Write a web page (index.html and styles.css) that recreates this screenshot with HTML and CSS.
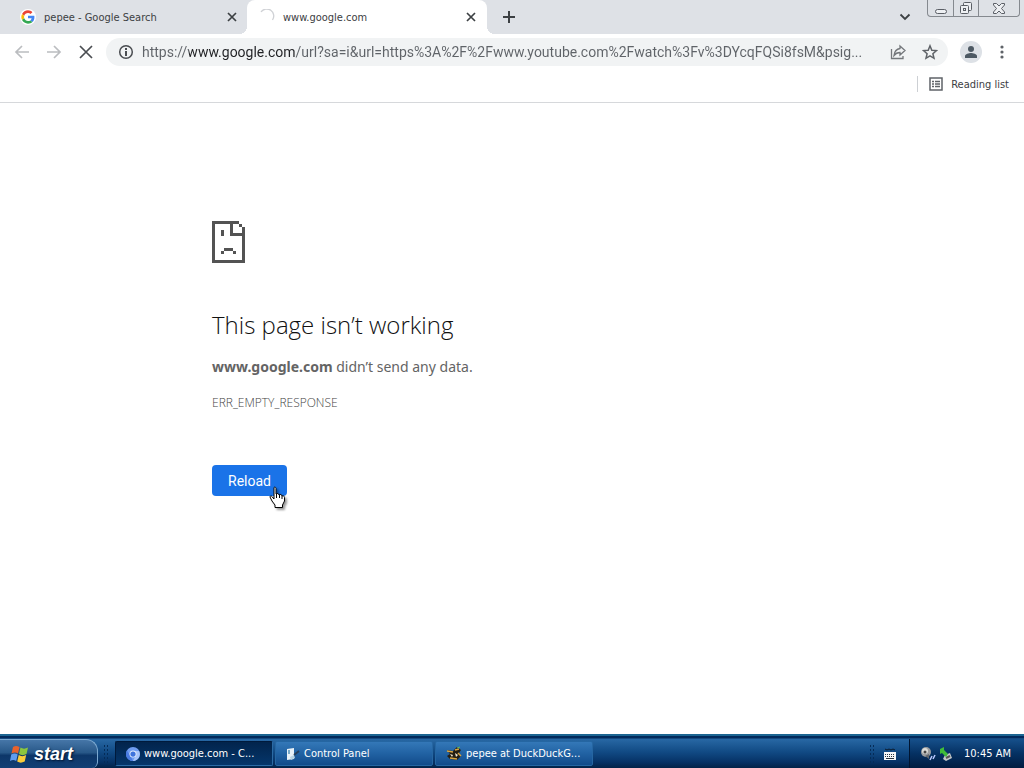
FILE: index.html
```html
<!DOCTYPE html>
<html lang="en">
<head>
    <meta charset="UTF-8">
    <meta name="viewport" content="width=device-width, initial-scale=1.0">
    <title>www.google.com</title>
    <link rel="stylesheet" href="styles.css">
</head>
<body>

    <!-- Tab strip -->
    <header class="tab-strip">
        <div class="tab">
            <svg class="tab-icon" viewBox="0 0 48 48" width="16" height="16">
                <circle cx="24" cy="24" r="24" fill="#fff"/>
                <path fill="#EA4335" d="M24 12c3 0 5.500 1 7.600 3l5.600-5.600C33.800 6.200 29.300 4 24 4 16.200 4 9.400 8.500 6.100 15l6.600 5.100C14.300 15.400 18.700 12 24 12z"/>
                <path fill="#4285F4" d="M43.300 24.500c0-1.500-.1-2.600-.4-3.900H24v7.500h10.900c-.5 2.600-1.900 4.700-4 6.200l6.400 5c3.800-3.500 6-8.700 6-14.800z"/>
                <path fill="#FBBC05" d="M12.700 28.100c-.8-2.600-.8-5.400 0-8L6.100 15c-2.800 5.700-2.800 12.400 0 18.100z"/>
                <path fill="#34A853" d="M24 44c5.300 0 9.900-1.700 13.300-4.700l-6.400-5c-1.800 1.200-4.100 1.900-6.900 1.900-5.300 0-9.700-3.400-11.300-8.100l-6.600 5C9.400 39.500 16.200 44 24 44z"/>
            </svg>
            <span class="tab-title">pepee - Google Search</span>
            <button class="icon-btn tab-close" type="button" aria-label="Close tab">
                <svg viewBox="0 0 10 10" width="10" height="10"><path d="M1 1l8 8M9 1L1 9" stroke="#3c4043" stroke-width="1.700" fill="none"/></svg>
            </button>
        </div>
        <div class="tab active">
            <svg class="tab-icon" viewBox="0 0 16 16" width="16" height="16"><path d="M2 3a7 7 0 0 1 11.500 8" stroke="#cfd1d5" stroke-width="1.300" fill="none"/></svg>
            <span class="tab-title">www.google.com</span>
            <button class="icon-btn tab-close" type="button" aria-label="Close tab">
                <svg viewBox="0 0 10 10" width="10" height="10"><path d="M1 1l8 8M9 1L1 9" stroke="#3c4043" stroke-width="1.700" fill="none"/></svg>
            </button>
        </div>
        <button class="icon-btn new-tab" type="button" aria-label="New tab">
            <svg viewBox="0 0 12 12" width="12" height="12"><path d="M6 0v12M0 6h12" stroke="#3c4043" stroke-width="2" fill="none"/></svg>
        </button>
        <button class="icon-btn tab-search" type="button" aria-label="Search tabs">
            <svg viewBox="0 0 12 8" width="12" height="8"><path d="M1.500 1.500L6 6l4.500-4.500" stroke="#3c4043" stroke-width="1.800" fill="none"/></svg>
        </button>
        <div class="window-controls">
            <button type="button" aria-label="Minimize">
                <svg viewBox="0 0 14 14" width="14" height="14"><rect x="1.500" y="8.500" width="11" height="4" rx="2" fill="#eef0f3" stroke="#5b5f66"/></svg>
            </button>
            <button type="button" aria-label="Restore">
                <svg viewBox="0 0 14 14" width="14" height="14" fill="#eef0f3" stroke="#5b5f66"><rect x="4.500" y="1.500" width="8" height="8" rx="1"/><rect x="1.500" y="4.500" width="8" height="8" rx="1"/><rect x="4.500" y="7.500" width="2" height="2"/></svg>
            </button>
            <button class="close" type="button" aria-label="Close">
                <svg viewBox="0 0 14 14" width="14" height="14"><path d="M1.500 2.500h3L7 5l2.500-2.500h3V4l-3 3.500 3 3.500v1.500h-3L7 10l-2.500 2.500h-3V11l3-3.500-3-3.500z" fill="#eef0f3" stroke="#5b5f66"/></svg>
            </button>
        </div>
    </header>

    <!-- Toolbar -->
    <nav class="toolbar">
        <div class="nav-buttons">
            <button class="icon-btn" type="button" aria-label="Back">
                <svg viewBox="0 0 16 16" width="16" height="16"><path d="M15 8H2M8 2L2 8l6 6" stroke="#bbbdc0" stroke-width="1.700" fill="none"/></svg>
            </button>
            <button class="icon-btn" type="button" aria-label="Forward">
                <svg viewBox="0 0 16 16" width="16" height="16"><path d="M1 8h13M8 2l6 6-6 6" stroke="#bbbdc0" stroke-width="1.700" fill="none"/></svg>
            </button>
            <button class="icon-btn" type="button" aria-label="Stop loading">
                <svg viewBox="0 0 16 16" width="16" height="16"><path d="M2 2l12 12M14 2L2 14" stroke="#4a4d51" stroke-width="1.700" fill="none"/></svg>
            </button>
        </div>
        <div class="omnibox">
            <button class="icon-btn" type="button" aria-label="View site information">
                <svg viewBox="0 0 16 16" width="16" height="16"><circle cx="8" cy="8" r="6.300" stroke="#4a4d51" stroke-width="1.500" fill="none"/><path d="M8 7v5M8 4v2" stroke="#4a4d51" stroke-width="2"/></svg>
            </button>
            <input class="url" type="text" aria-label="Address" value="https://www.google.com/url?sa=i&amp;url=https%3A%2F%2Fwww.youtube.com%2Fwatch%3Fv%3DYcqFQSi8fsM&amp;psig...">
            <button class="icon-btn" type="button" aria-label="Share this page">
                <svg viewBox="0 0 16 16" width="16" height="16" fill="none" stroke="#74777b" stroke-width="1.300"><path d="M1.500 5v9.500h11.500V12"/><path d="M10 2l5 4.500L10 11V8.500C7 8.500 5.500 9.500 4 11.500 4.500 7.500 6.500 5 10 4.500z"/></svg>
            </button>
            <button class="icon-btn" type="button" aria-label="Bookmark this tab">
                <svg viewBox="0 0 16 16" width="16" height="16"><path d="M8 1.800l1.800 4.400 4.700.4-3.600 3.100 1.100 4.600L8 11.900l-4 2.400 1.100-4.600-3.600-3.100 4.700-.4z" stroke="#5f6368" stroke-width="1.500" fill="none"/></svg>
            </button>
        </div>
        <button class="icon-btn avatar" type="button" aria-label="Profile">
            <svg viewBox="0 0 22 22" width="22" height="22"><circle cx="11" cy="11" r="11" fill="#dde1e6"/><circle cx="11" cy="8" r="3" fill="#4d5963"/><path d="M5 17v-2c0-2 4-3 6-3s6 1 6 3v2z" fill="#4d5963"/></svg>
        </button>
        <button class="icon-btn" type="button" aria-label="Menu">
            <svg viewBox="0 0 16 16" width="16" height="16" fill="#5f6368"><circle cx="8" cy="3" r="1.600"/><circle cx="8" cy="8" r="1.600"/><circle cx="8" cy="13" r="1.600"/></svg>
        </button>
    </nav>

    <!-- Bookmarks bar -->
    <div class="bookmarks">
        <button class="reading-list" type="button">
            <svg viewBox="0 0 14 14" width="14" height="14"><rect x="1" y="1" width="12" height="12" fill="none" stroke="#5f6368" stroke-width="1.500"/><path d="M3 4.500h2M3 7h2M3 9.500h2M6 4.500h5M6 7h5M6 9.500h5" stroke="#5f6368" stroke-width="1.300"/></svg>
            Reading list
        </button>
    </div>

    <!-- Error page -->
    <main class="error-page">
        <svg class="error-icon" viewBox="0 0 11 14" width="33" height="42" shape-rendering="crispEdges" fill="#535353">
            <path d="M0 0h9v1h1v1h1v12H0zM1 1v12h9V5H6V1zM7 1v3h3V2H9V1z" fill-rule="evenodd"/>
            <path d="M3 3h1v2H3zM4 9h3v1H4zM3 10h1v1H3zM7 10h1v1H7z"/>
        </svg>
        <h1>This page isn’t working</h1>
        <p class="summary"><strong>www.google.com</strong> didn’t send any data.</p>
        <p class="error-code">ERR_EMPTY_RESPONSE</p>
        <div class="reload-wrap">
            <button class="reload" type="button">Reload</button>
            <svg class="cursor" viewBox="0 0 17 22" width="17" height="22">
                <path d="M5 1.500c1-1 2 0 2 1V8c1-1 3-.5 3 1 1-1 3-.5 3 1 1-.5 2.500 0 2.500 1.500V15l-2 4v2.500H6V19l-3-4-2-4c0-1.500 2-1.500 3 1l1 1z" fill="#fff" stroke="#000"/>
                <path d="M7.500 8v4M10.500 9v3M13 10v3" stroke="#000"/>
            </svg>
        </div>
    </main>

    <!-- Taskbar -->
    <footer class="taskbar">
        <button class="start" type="button">
            <svg viewBox="0 0 20 18" width="20" height="18">
                <path d="M3 2c2-1.500 4-1.500 6.500 0L8 8.500C6 7 4 7 1.500 8.500z" fill="#e8622c"/>
                <path d="M10.500 2.500c2.500 1.500 4.500 1.500 7.500 0L16.500 9c-3 1.500-5 1.500-7.500 0z" fill="#8cc63e"/>
                <path d="M1.200 9.500c2.500-1.500 4.500-1.500 6.500 0L6.200 16C4 14.500 2.500 14.500 0 16z" fill="#5f9df0"/>
                <path d="M8.700 10c2.500 1.500 4.500 1.500 7.500 0l-1.500 6.500c-3 1.500-5 1.500-7.500 0z" fill="#fbcd3a"/>
            </svg>
            start
        </button>
        <span class="grip"></span>
        <button class="task current" type="button">
            <svg viewBox="0 0 16 16" width="14" height="14"><circle cx="8" cy="8" r="8" fill="#6f9cf0"/><path d="M8 4.500h7A8 8 0 0 1 8 16l3-6z" fill="#a9c6fa"/><path d="M1 4l4 6 3 6A8 8 0 0 1 1 4z" fill="#4a7be0"/><circle cx="8" cy="8" r="4" fill="#e5eefc"/><circle cx="8" cy="8" r="3" fill="#3f74dc"/></svg>
            <span>www.google.com - C...</span>
        </button>
        <button class="task" type="button">
            <svg viewBox="0 0 14 14" width="14" height="14"><path d="M1 2l7-1v11l-7 1z" fill="#e8f1f7"/><path d="M2 3l2 0v4H2z" fill="#78a9c8"/><path d="M8 8l5-4" stroke="#263f5b" stroke-width="2"/><path d="M4 10l4-2 1 3-4 2z" fill="#b8d3e2"/></svg>
            <span>Control Panel</span>
        </button>
        <button class="task" type="button">
            <svg viewBox="0 0 16 16" width="16" height="16"><path d="M1 4l6 1 4-4 4 3-2 3 2 3-4 4-7-1-3-3 3-2z" fill="#241d12"/><path d="M1 5l6 1M9 4l4-1M4 12l7 1M12 7l3 3" stroke="#d9a441" stroke-width="1.500"/><path d="M4 8l3 1-1 2zM9 7l3 2-2 2z" fill="#f3ead0"/><path d="M11 2l3-1" stroke="#5cb85c"/></svg>
            <span>pepee at DuckDuckG...</span>
        </button>
        <span class="grip push"></span>
        <button class="icon-btn keyboard" type="button" aria-label="Keyboard">
            <svg viewBox="0 0 14 14" width="14" height="14"><path d="M2 2l2 1 2-1 2 1 2-1 2 1" stroke="#0b1a2c" fill="none"/><rect x="1" y="5" width="12" height="8" fill="#f4f6f8"/><path d="M2 7.500h10M2 9.500h10" stroke="#26323e" stroke-dasharray="1 1"/><path d="M3 11.500h8" stroke="#26323e"/></svg>
        </button>
        <div class="tray">
            <svg viewBox="0 0 16 16" width="16" height="16"><circle cx="6" cy="6" r="5" fill="#9b9d9f"/><circle cx="5" cy="5" r="3" fill="#dcdcd8"/><circle cx="5" cy="6" r="1.500" fill="#444"/><path d="M5 10l4-2v5z" fill="#62676c"/><path d="M10 14l2-4M13 13l2-4" stroke="#b8c9ff" stroke-width="1.500"/></svg>
            <svg viewBox="0 0 14 16" width="14" height="16"><path d="M6 9l5-2 2 5-6 3-3-2z" fill="#c3c7c9"/><path d="M7 12l4-2" stroke="#555" stroke-width="2"/><path d="M1 3l4-2v3l4 4-2 3-4-4-2 1z" fill="#40bd38"/></svg>
            <time>10:45 AM</time>
        </div>
    </footer>

</body>
</html>
```
FILE: styles.css
```css
/* General Styles */
* {
    box-sizing: border-box;
}
body {
    display: flex;
    flex-direction: column;
    min-height: 100vh;
    margin: 0;
    background-color: #fff;
    color: #3c4043;
    font-family: Tahoma, "DejaVu Sans Condensed", sans-serif;
    font-size: 11px;
}
button {
    font-family: inherit;
    font-size: inherit;
    color: inherit;
    padding: 0;
    border: none;
    background: none;
    cursor: pointer;
}
svg {
    display: block;
    flex: none;
}
.icon-btn {
    display: flex;
    flex: none;
    align-items: center;
    justify-content: center;
    width: 16px;
    height: 16px;
}

/* Tab Strip */
.tab-strip {
    display: flex;
    height: 34px;
    background-color: #dee1e6;
}
.tab {
    display: flex;
    align-items: center;
    gap: 8px;
    flex: 0 1 247px;
    padding: 0 7px 0 20px;
}
.tab-title {
    flex: 1;
    white-space: nowrap;
}
.tab.active {
    position: relative;
    flex-basis: 240px;
    padding: 0 8px 0 12px;
    border-radius: 8px 8px 0 0;
    background-color: #fff;
}
.tab.active::before,
.tab.active::after {
    content: "";
    position: absolute;
    bottom: 0;
    width: 8px;
    height: 8px;
}
.tab.active::before {
    right: 100%;
    background: radial-gradient(circle at 0 0, transparent 8px, #fff 8px);
}
.tab.active::after {
    left: 100%;
    background: radial-gradient(circle at 100% 0, transparent 8px, #fff 8px);
}
.new-tab {
    margin: 9px 14px;
}
.tab-search {
    margin: 9px 14px 0 auto;
}
.window-controls {
    display: flex;
    height: 17px;
    margin-right: 4px;
    border: 1px solid #85898f;
    border-top: none;
    border-radius: 0 0 4px 4px;
}
.window-controls button {
    display: flex;
    justify-content: center;
    align-items: center;
    width: 25px;
}
.window-controls button + button {
    border-left: 1px solid #85898f;
}
.window-controls .close {
    width: 41px;
}

/* Toolbar */
.toolbar {
    display: flex;
    align-items: center;
    gap: 12px;
    height: 36px;
    padding: 0 14px;
}
.nav-buttons {
    display: flex;
    gap: 16px;
}
.omnibox {
    display: flex;
    flex: 1;
    align-items: center;
    gap: 16px;
    height: 28px;
    padding: 0 10px 0 12px;
    border-radius: 14px;
    background-color: #f1f3f4;
}
.url {
    flex: 1;
    min-width: 0;
    height: 24px;
    margin: 0 -4px 0 -8px;
    padding: 0;
    border: none;
    outline: none;
    font-family: Roboto, sans-serif;
    font-size: 14px;
    color: transparent;
    /* scheme and path in grey, host in near-black */
    background: linear-gradient(to right, #5f6368 47px, #202124 47px, #202124 153px, #5f6368 153px);
    -webkit-background-clip: text;
    background-clip: text;
}
.avatar {
    width: 22px;
    height: 22px;
}

/* Bookmarks Bar */
.bookmarks {
    display: flex;
    justify-content: flex-end;
    align-items: center;
    height: 33px;
    padding: 0 15px 4px;
    border-bottom: 1px solid #d6d8db;
}
.reading-list {
    display: flex;
    align-items: center;
    gap: 8px;
    height: 16px;
    padding-left: 11px;
    border-left: 1px solid #cdd0d4;
}

/* Error Page */
.error-page {
    flex: 1;
    width: 100%;
    max-width: 600px;
    margin: 0 auto;
    padding-top: 118px;
    font-family: "Noto Sans", sans-serif;
    color: #646464;
}
h1 {
    margin: 44px 0 14px;
    font-family: "Open Sans", sans-serif;
    font-size: 24px;
    font-weight: 350;
    line-height: 36px;
    color: #111;
}
p {
    margin: 0;
}
.summary {
    font-size: 14px;
    line-height: 20px;
}
.error-code {
    margin-top: 16px;
    font-family: "Open Sans", sans-serif;
    font-size: 12px;
    font-weight: 300;
    line-height: 20px;
    color: #444;
}
.reload-wrap {
    position: relative;
    display: inline-block;
    margin-top: 52px;
}
.reload {
    display: block;
    height: 31px;
    padding: 0 16px;
    border-radius: 4px;
    background-color: #1a73e8;
    color: #fff;
    font-family: Roboto, sans-serif;
    font-size: 14px;
}
.cursor {
    position: absolute;
    right: 1px;
    bottom: -12px;
    filter: drop-shadow(2px 2px 1px rgba(0, 0, 0, 0.4));
    pointer-events: none;
}

/* Taskbar */
.taskbar {
    display: flex;
    align-items: stretch;
    height: 34px;
    padding-top: 5px;
    background: linear-gradient(#1c6592 0 2px, #022a5c 2px 4px, #2868a4 5px, #114a84 18px, #063266 28px, #022348);
    color: #fff;
}
.start {
    display: flex;
    align-items: center;
    gap: 4px;
    width: 98px;
    padding-left: 10px;
    border-top: 1px solid #7ba8d0;
    border-right: 1px solid #7ba8d0;
    border-radius: 0 12px 6px 0;
    background: linear-gradient(#4676a8, #285888 45%, #0d3769 55%, #123f74);
    font-family: "Liberation Sans", sans-serif;
    font-size: 18px;
    font-weight: 700;
    font-style: italic;
    text-shadow: 1px 1px 2px #001430;
}
.grip {
    width: 5px;
    margin: 5px 6px 4px 5px;
    background: radial-gradient(circle, #052c58 1px, transparent 1px) 0 0 / 3px 4px;
}
.grip.push {
    margin: 5px 8px 4px auto;
}
.task {
    display: flex;
    flex: 0 1 158px;
    align-items: center;
    gap: 4px;
    margin: 2px 1px;
    padding: 0 10px;
    border: 1px solid #2566a2;
    border-radius: 2px;
    background: linear-gradient(#3478b8, #2162a3 50%, #124b8a);
    white-space: nowrap;
}
.task.current {
    border-color: #001a3c #2b6ba5 #2b6ba5 #001a3c;
    background: linear-gradient(#02244c, #05366b);
}
.keyboard {
    align-self: center;
    margin-right: 11px;
}
.tray {
    display: flex;
    align-items: center;
    gap: 3px;
    padding: 0 13px 0 10px;
    border-left: 1px solid #001531;
    background: linear-gradient(#16508b, #053163 50%, #011c40);
}
.tray time {
    margin-left: 8px;
}
```
